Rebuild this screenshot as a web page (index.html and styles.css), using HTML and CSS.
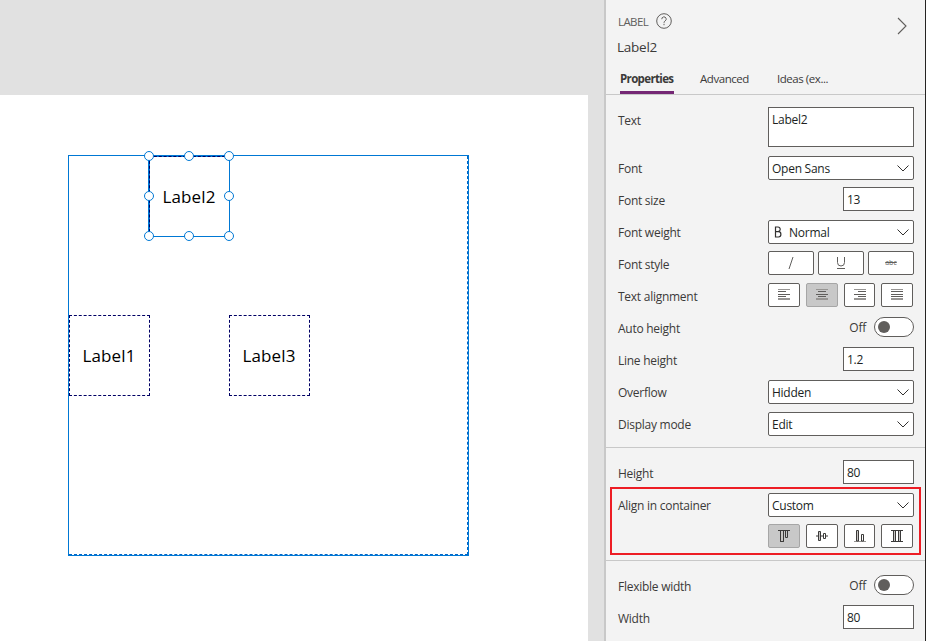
FILE: index.html
```html
<!DOCTYPE html>
<html lang="en">
<head>
<meta charset="utf-8">
<title>Label2 properties</title>
<link rel="stylesheet" href="styles.css">
</head>
<body>
<div class="app">
  <main class="workspace">
    <div class="screen">
      <div class="container">
        <div class="node label-2"><span>Label2</span>
          <i class="handle nw"></i><i class="handle n"></i><i class="handle ne"></i>
          <i class="handle w"></i><i class="handle e"></i>
          <i class="handle sw"></i><i class="handle s"></i><i class="handle se"></i>
        </div>
        <div class="node label-1"><span>Label1</span></div>
        <div class="node label-3"><span>Label3</span></div>
      </div>
    </div>
  </main>
  <aside class="panel">
    <header class="head">
      <div class="head-text">
        <div class="kind"><span class="t-kind">LABEL</span>
          <svg width="16" height="16" viewBox="0 0 16 16" fill="none" stroke="#605e5c"><circle cx="8" cy="8" r="7.3"/><path d="M5.800 6.200a2.200 2.200 0 1 1 3.400 1.700c-.8.5-1.200.9-1.200 1.900M8 10.800v1.400"/></svg>
        </div>
        <div class="name">Label2</div>
      </div>
      <svg class="collapse" width="10" height="18" viewBox="0 0 10 18" fill="none" stroke="#605e5c" stroke-width="1.1"><path d="M1 1l8 8-8 8"/></svg>
    </header>
    <nav class="tabs"><span class="tab active">Properties</span><span class="tab advanced">Advanced</span><span class="tab ideas">Ideas (ex...</span></nav>

    <section class="group main">
      <div class="row tall"><label>Text</label><div class="field area">Label2</div></div>
      <div class="row"><label>Font</label><div class="select"><span>Open Sans</span><svg class="chev" viewBox="0 0 12 7"><path d="M.5.5L6 6 11.5.5"/></svg></div></div>
      <div class="row"><label>Font size</label><div class="field up">13</div></div>
      <div class="row"><label>Font weight</label><div class="select"><svg class="bold" viewBox="0 0 8 12"><path d="M1.500 1h2.500a2.200 2.300 0 0 1 0 4.600H1.500zM1.500 5.600h3a2.400 2.700 0 0 1 0 5.400H1.500z"/></svg><span>Normal</span><svg class="chev" viewBox="0 0 12 7"><path d="M.5.5L6 6 11.5.5"/></svg></div></div>
      <div class="row"><label>Font style</label><div class="buttons styles up">
        <button><svg width="14" height="14" viewBox="0 0 14 14"><path d="M9 1L5 13"/></svg></button>
        <button><svg width="14" height="14" viewBox="0 0 14 14"><path d="M3.5 1v5.500a3.500 3.500 0 0 0 7 0V1M3 12.500h8"/></svg></button>
        <button><span class="strike">abc</span></button></div></div>
      <div class="row"><label>Text alignment</label><div class="buttons aligns up">
        <button><svg width="12" height="12" viewBox="0 0 12 12"><path class="soft" d="M0 .5h12M0 9.500h12M0 10.500h12"/><path d="M0 2.500h8M0 5.500h12M0 7.500h8"/></svg></button>
        <button class="on"><svg width="12" height="12" viewBox="0 0 12 12"><path class="soft" d="M0 .5h12M0 9.500h12M0 10.500h12"/><path d="M2 2.500h8M0 5.500h12M2 7.500h8"/></svg></button>
        <button><svg width="12" height="12" viewBox="0 0 12 12"><path class="soft" d="M0 .5h12M0 9.500h12M0 10.500h12"/><path d="M4 2.500h8M0 5.500h12M4 7.500h8"/></svg></button>
        <button><svg width="12" height="12" viewBox="0 0 12 12"><path class="soft" d="M0 .5h12M0 9.500h12M0 10.500h12"/><path d="M0 2.500h12M0 5.500h12M0 7.500h12"/></svg></button></div></div>
      <div class="row"><label>Auto height</label><div class="switch up"><span>Off</span><i class="toggle"></i></div></div>
      <div class="row"><label>Line height</label><div class="field up">1.2</div></div>
      <div class="row"><label>Overflow</label><div class="select"><span>Hidden</span><svg class="chev" viewBox="0 0 12 7"><path d="M.5.5L6 6 11.5.5"/></svg></div></div>
      <div class="row"><label>Display mode</label><div class="select"><span>Edit</span><svg class="chev" viewBox="0 0 12 7"><path d="M.5.5L6 6 11.5.5"/></svg></div></div>
    </section>

    <section class="group height">
      <div class="row"><label>Height</label><div class="field up">80</div></div>
      <div class="marked">
        <div class="row"><label>Align in container</label><div class="select"><span>Custom</span><svg class="chev" viewBox="0 0 12 7"><path d="M.5.5L6 6 11.5.5"/></svg></div></div>
        <div class="row"><label></label><div class="buttons aligns place up">
          <button class="on"><svg width="12" height="12" viewBox="0 0 12 12"><path class="fill" d="M2.500.5h3v11h-3z"/><path d="M0 .5h12M2.500 1v10.500h3V1M7.500 1v6.500h2V1"/></svg></button>
          <button><svg width="12" height="12" viewBox="0 0 12 12"><path d="M0 6h2.500M5 6h2.500M10 6h2"/><path class="fill" d="M2.500 1.500h2v9h-2z"/><path d="M7.500 3.500h2v5h-2z"/></svg></button>
          <button><svg width="12" height="12" viewBox="0 0 12 12"><path class="soft" d="M0 11.500h12"/><path class="fill" d="M2.500 11V.5h2V11z"/><path d="M7.500 11V4.500h2V11z"/></svg></button>
          <button><svg width="12" height="12" viewBox="0 0 12 12"><path class="fill" d="M2.500.5h2v11h-2zM7.500.5h2v11h-2z"/><path d="M0 .5h12M0 11.500h12"/></svg></button></div></div>
        <div class="outline"></div>
      </div>
    </section>

    <section class="group width">
      <div class="row"><label>Flexible width</label><div class="switch up"><span>Off</span><i class="toggle"></i></div></div>
      <div class="row"><label>Width</label><div class="field up">80</div></div>
    </section>
  </aside>
</div>
</body>
</html>
```
FILE: styles.css
```css
* { box-sizing: border-box; }
body { margin: 0; overflow: hidden; font-family: "Open Sans", sans-serif; font-size: 12px; color: #3b3a39; }
svg { display: block; flex: none; }
.app { display: flex; width: 926px; height: 641px; }

.workspace { width: 604px; padding: 95px 16px 0 0; background: #e1e1e1; }
.screen { height: 546px; padding: 60px 0 0 68px; background: #fff; }
.container { position: relative; width: 401px; height: 401px; border: 1px solid #0078d4; }
.container::after { content: ""; position: absolute; inset: 0; border: 0 dashed #0067c8; border-width: 0 1px 1px 0; }
.node { position: absolute; width: 81px; height: 81px; border: 1px dashed #000064; display: flex; align-items: center; justify-content: center; font-size: 17px; letter-spacing: .15px; color: #000; z-index: 1; }
.node span { margin-left: -1px; }
.label-1 { left: 0; top: 159px; }
.label-3 { left: 160px; top: 159px; }
.label-2 { left: 80px; top: 0; border-color: #000064 transparent transparent #000064; background: linear-gradient(#fff, #fff) padding-box, linear-gradient(#0078d4, #0078d4) border-box; }
.label-2::before { content: ""; position: absolute; inset: -2px -1px -1px -2px; border: 1px solid #0078d4; }
.handle { position: absolute; width: 10px; height: 10px; border: 1px solid #0078d4; border-radius: 50%; background: #fff; }
.nw, .w, .sw { left: -6px; }
.n, .s { left: 34px; }
.ne, .e, .se { left: 74px; }
.nw, .n, .ne { top: -6px; }
.w, .e { top: 34px; }
.sw, .s, .se { top: 74px; }

.panel { width: 322px; border-left: 2px solid #c8c8c8; border-right: 1px solid #252423; background: #f3f3f3; }
.head { display: flex; justify-content: space-between; height: 64px; padding: 12px 18px 0 12px; }
.kind { display: flex; align-items: center; height: 17px; gap: 7px; color: #605e5c; }
.t-kind { font-size: 11.500px; letter-spacing: -.6px; padding-top: 2px; width: 31px; }
.name { margin-top: 9px; line-height: 19px; font-size: 13.500px; letter-spacing: -.25px; margin-left: -1px; }
.collapse { margin-top: 5px; }
.tabs { display: flex; height: 31px; padding-left: 14px; border-bottom: 1px solid #c8c8c8; line-height: 30px; font-size: 11.500px; letter-spacing: -.45px; white-space: nowrap; }
.tab.active { width: 54px; font-weight: 700; border-bottom: 3px solid #742774; letter-spacing: -.65px; }
.tab.advanced { margin-left: 26px; width: 51px; }
.tab.ideas { margin-left: 26px; }

.group { padding: 0 11px 0 12px; }
.main { height: 353px; padding-top: 9px; border-bottom: 1px solid #c8c8c8; }
.height { height: 113px; padding-top: 9px; border-bottom: 1px solid #c8c8c8; }
.width { padding-top: 9px; }
.row { display: flex; align-items: center; justify-content: space-between; height: 32px; letter-spacing: -.26px; white-space: nowrap; }
.row.tall { height: 48px; align-items: flex-start; }
.tall label { line-height: 32px; }
.row label { padding-top: 1px; }
.up { margin-bottom: 2px; }
.field { width: 71px; height: 24px; padding-left: 3px; border: 1px solid #605e5c; background: #fff; line-height: 24px; color: #201f1e; }
.area { width: 146px; height: 40px; margin-top: 3px; padding-left: 3px; }
.select { display: flex; align-items: center; width: 146px; height: 24px; padding: 0 4px 0 3px; border: 1px solid #605e5c; border-radius: 2px; background: #fff; color: #201f1e; }
.select span { padding-top: 1px; }
.chev { width: 12px; height: 7px; margin-left: auto; fill: none; stroke: #323130; }
.bold { width: 8px; height: 12px; margin: 0 7px 0 2px; fill: none; stroke: #323130; stroke-width: 1.2; }
.buttons { display: flex; width: 146px; }
.styles { gap: 4px; }
.aligns { gap: 6px; }
button { display: flex; align-items: center; justify-content: center; width: 32px; height: 24px; padding: 0; border: 1px solid #605e5c; border-radius: 2px; background: #fff; font: inherit; color: #605e5c; }
.styles button { width: 46px; }
.aligns button:nth-child(3) { width: 31px; }
button svg { fill: none; stroke: #605e5c; stroke-width: 1; }
button .soft { stroke: #979593; }
button .fill { fill: #c8c6c4; }
.place svg { stroke: #3b3a39; }
button.on { background: #c8c8c8; border-color: #a6a6a6; }
.strike { font-size: 7px; line-height: 10px; text-decoration: line-through; }
.switch { display: flex; align-items: center; gap: 8px; }
.toggle { display: block; width: 40px; height: 20px; padding: 3px; border: 1px solid #605e5c; border-radius: 10px; background: #fff; }
.toggle::before { content: ""; display: block; width: 12px; height: 12px; border-radius: 50%; background: #605e5c; }
.marked { position: relative; }
.outline { position: absolute; left: -8px; right: -7px; top: -2px; height: 68px; border: 2px solid #ed1c24; }
```
